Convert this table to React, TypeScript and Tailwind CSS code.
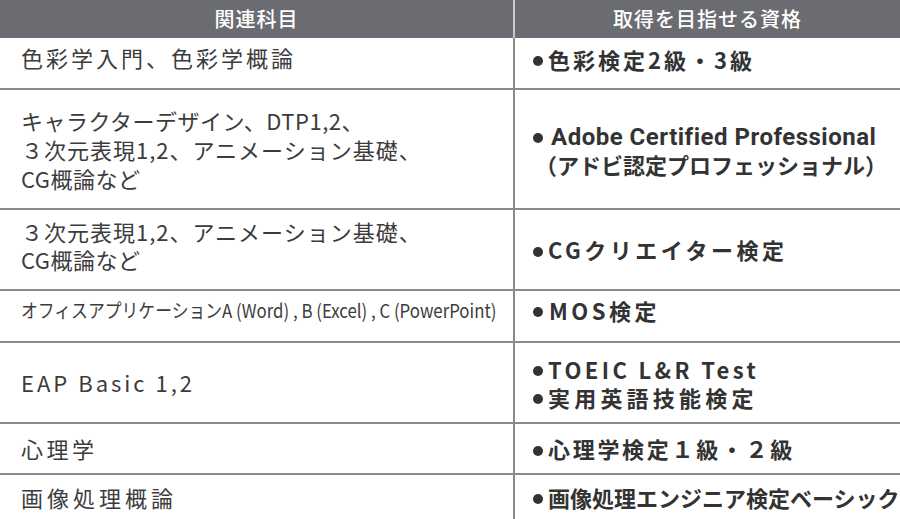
import React from "react";

const JP = { fontFamily: '"Noto Sans CJK JP", "Noto Sans", sans-serif' };

function B({ children, className = "", gap = "mr-[5px]" }: { children: React.ReactNode; className?: string; gap?: string }) {
  return (
    <div className={"flex items-center whitespace-nowrap " + className}>
      <span className={"inline-block w-[10px] h-[10px] shrink-0 rounded-full bg-[#333] translate-y-[2px] " + gap} />
      <span>{children}</span>
    </div>
  );
}

export default function App() {
  return (
    <div className="w-[900px] h-[519px] overflow-hidden bg-white" style={JP}>
      {/* header */}
      <div className="flex h-[38px] bg-[#6b6c71] text-white text-[20px] font-medium tracking-[1px]">
        <div className="w-[513px] flex items-center justify-center">関連科目</div>
        <div className="w-[2px] bg-[#c9c9cb]" />
        <div className="flex-1 flex items-center justify-center">取得を目指せる資格</div>
      </div>

      {/* row 1 */}
      <div className="flex h-[52px] border-b-2 border-[#8a8a8a]">
        <div className="w-[513px] pl-[21px] pb-[12px] flex items-center text-[22px] tracking-[3px] text-[#3c3c3c]">色彩学入門、色彩学概論</div>
        <div className="w-[2px] bg-[#8a8a8a]" />
        <div className="flex-1 pl-[18px] pb-[8px] flex items-center text-[22px] font-bold tracking-[3px] text-[#333]"><B>色彩検定2級・3級</B></div>
      </div>

      {/* row 2 */}
      <div className="flex h-[120px] border-b-2 border-[#8a8a8a]">
        <div className="w-[513px] pl-[21px] flex flex-col justify-center text-[22px] leading-[29px] tracking-[0.5px] text-[#3c3c3c]">
          <div>キャラクターデザイン、DTP1,2、</div>
          <div className="tracking-[1px]">３次元表現1,2、アニメーション基礎、</div>
          <div>CG概論など</div>
        </div>
        <div className="w-[2px] bg-[#8a8a8a]" />
        <div className="flex-1 pl-[18px] flex flex-col justify-center text-[22px] font-bold leading-[25px] text-[#333]">
          <B gap="mr-[8px]" className="text-[24px] tracking-[0.5px]">
            <span style={{ fontFamily: 'Roboto, "Noto Sans CJK JP", sans-serif' }}>Adobe Certified Professional</span>
          </B>
          <div className="pl-[2px] pt-[2px]">（アドビ認定プロフェッショナル）</div>
        </div>
      </div>

      {/* row 3 */}
      <div className="flex h-[81px] border-b-2 border-[#8a8a8a]">
        <div className="w-[513px] pl-[21px] pb-[10px] flex flex-col justify-center text-[22px] leading-[28px] tracking-[1px] text-[#3c3c3c]">
          <div>３次元表現1,2、アニメーション基礎、</div>
          <div className="tracking-[0.5px]">CG概論など</div>
        </div>
        <div className="w-[2px] bg-[#8a8a8a]" />
        <div className="flex-1 pl-[18px] flex items-center text-[22px] font-bold tracking-[3.5px] text-[#333]"><B>CGクリエイター検定</B></div>
      </div>

      {/* row 4 */}
      <div className="flex h-[52px] border-b-2 border-[#8a8a8a]">
        <div className="w-[513px] pl-[21px] pb-[12px] flex items-center text-[19px] text-[#3c3c3c] whitespace-nowrap">
          <span className="inline-block origin-left scale-x-[0.885]">オフィスアプリケーションA (Word) , B (Excel) , C (PowerPoint)</span>
        </div>
        <div className="w-[2px] bg-[#8a8a8a]" />
        <div className="flex-1 pl-[18px] pb-[12px] flex items-center text-[22px] font-bold tracking-[3.5px] text-[#333]"><B gap="mr-[6px]">MOS検定</B></div>
      </div>

      {/* row 5 */}
      <div className="flex h-[81px] border-b-2 border-[#8a8a8a]">
        <div className="w-[513px] pl-[21px] flex items-center text-[22px] tracking-[3px] text-[#3c3c3c]">EAP Basic 1,2</div>
        <div className="w-[2px] bg-[#8a8a8a]" />
        <div className="flex-1 pl-[18px] flex flex-col justify-center text-[22px] font-bold leading-[28px] text-[#333]">
          <B className="tracking-[3.4px]">TOEIC L&amp;R Test</B>
          <B className="tracking-[4.2px]">実用英語技能検定</B>
        </div>
      </div>

      {/* row 6 */}
      <div className="flex h-[51px] border-b-2 border-[#8a8a8a]">
        <div className="w-[513px] pl-[21px] flex items-center text-[22px] tracking-[3.5px] text-[#3c3c3c]">心理学</div>
        <div className="w-[2px] bg-[#8a8a8a]" />
        <div className="flex-1 pl-[18px] flex items-center text-[22px] font-bold tracking-[2.7px] text-[#333]"><B>心理学検定１級・２級</B></div>
      </div>

      {/* row 7 */}
      <div className="flex h-[60px]">
        <div className="w-[513px] pl-[21px] pb-[16px] flex items-center text-[22px] tracking-[4px] text-[#3c3c3c]">画像処理概論</div>
        <div className="w-[2px] bg-[#8a8a8a]" />
        <div className="flex-1 pl-[18px] pb-[16px] flex items-center text-[22px] font-bold text-[#333]"><B>画像処理エンジニア検定ベーシック</B></div>
      </div>
    </div>
  );
}
